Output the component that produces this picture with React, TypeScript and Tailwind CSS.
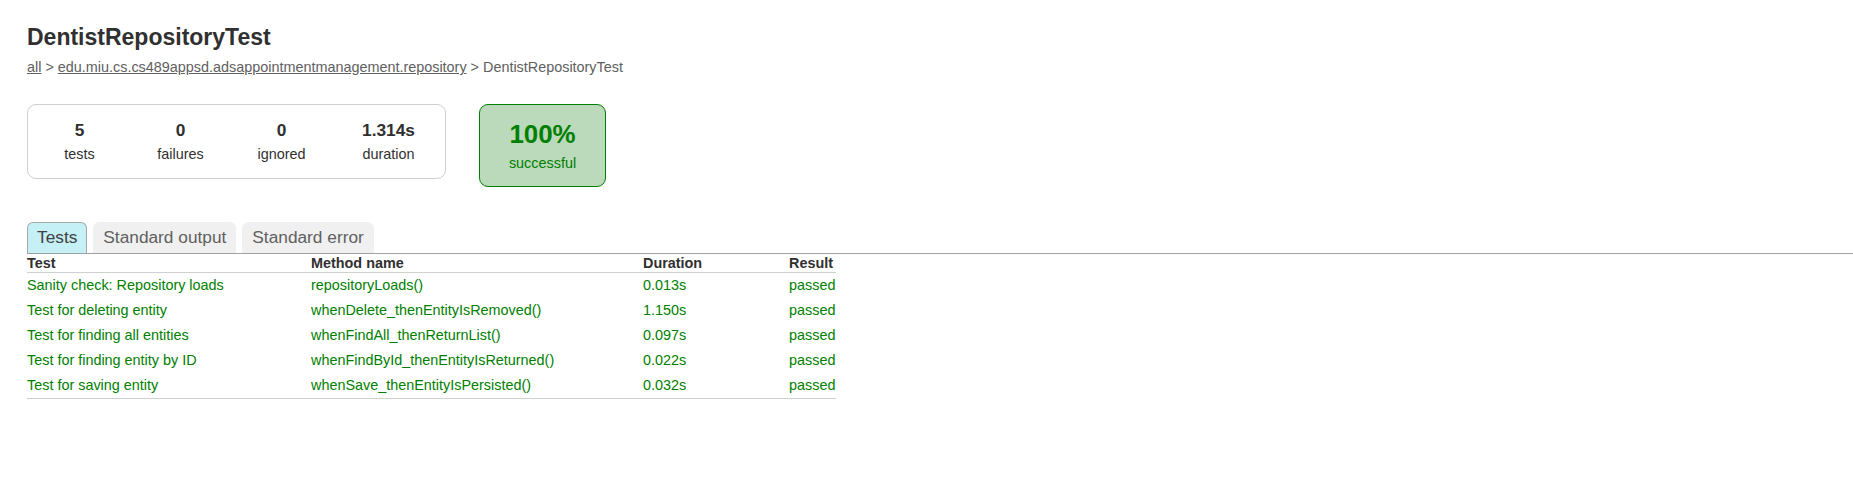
import React from 'react';

const rows = [
    { name: 'Sanity check: Repository loads', method: 'repositoryLoads()', duration: '0.013s' },
    { name: 'Test for deleting entity', method: 'whenDelete_thenEntityIsRemoved()', duration: '1.150s' },
    { name: 'Test for finding all entities', method: 'whenFindAll_thenReturnList()', duration: '0.097s' },
    { name: 'Test for finding entity by ID', method: 'whenFindById_thenEntityIsReturned()', duration: '0.022s' },
    { name: 'Test for saving entity', method: 'whenSave_thenEntityIsPersisted()', duration: '0.032s' },
];

const counters = [
    { value: '5', label: 'tests', width: 'w-[101px]' },
    { value: '0', label: 'failures', width: 'w-[101px]' },
    { value: '0', label: 'ignored', width: 'w-[101px]' },
    { value: '1.314s', label: 'duration', width: 'w-[113px]' },
];

const tabs = ['Tests', 'Standard output', 'Standard error'];

const App: React.FC = () => {
    return (
        <div className="min-h-screen bg-white text-[#303030] text-[14.4px] font-['Liberation_Sans',Arial,sans-serif]">
            <div className="pl-[27px] pt-[24px]">
                <h1 className="text-[23px] font-bold leading-[27px] whitespace-nowrap">DentistRepositoryTest</h1>
                <div className="mt-[8px] leading-[17px] text-[#606060] whitespace-nowrap">
                    <a className="underline">all</a> &gt;{' '}
                    <a className="underline">edu.miu.cs.cs489appsd.adsappointmentmanagement.repository</a> &gt; DentistRepositoryTest
                </div>

                {/* summary */}
                <div className="mt-[28px] flex items-start">
                    <div className="flex border border-[#d0d0d0] rounded-[9px] pl-[1px]">
                        {counters.map(c => (
                            <div key={c.label} className={`${c.width} text-center pt-[15px] pb-[15px]`}>
                                <p className="text-[17.3px] font-bold leading-[20px] mb-[6px]">{c.value}</p>
                                <p className="leading-[17px]">{c.label}</p>
                            </div>
                        ))}
                    </div>
                    <div className="ml-[33px] w-[127px] h-[83px] border border-[#008000] bg-[#bbd9bb] rounded-[9px] text-center text-[#008000] pt-[14px]">
                        <p className="text-[25.9px] font-bold leading-[30px] mb-[6px]">100%</p>
                        <p className="leading-[17px]">successful</p>
                    </div>
                </div>

                {/* tabs */}
                <div className="mt-[35px] flex gap-[6px] border-b border-[#a0a0a0]">
                    {tabs.map((t, i) => (
                        <div
                            key={t}
                            className={
                                i === 0
                                    ? 'px-[9px] h-[31px] flex items-center rounded-t-[6px] border border-b-0 border-[#a8a8a8] bg-[#c5f0f5] text-[17.3px] text-[#404040]'
                                    : 'px-[9px] h-[31px] flex items-center rounded-t-[6px] border border-b-0 border-[#f0f0f0] bg-[#f0f0f0] text-[17.3px] text-[#606060]'
                            }
                        >
                            {t}
                        </div>
                    ))}
                </div>

                {/* table */}
                <table className="table-fixed border-collapse w-[809px] border-b border-[#d0d0d0]">
                    <colgroup>
                        <col className="w-[284px]" />
                        <col className="w-[332px]" />
                        <col className="w-[146px]" />
                        <col className="w-[47px]" />
                    </colgroup>
                    <thead>
                        <tr className="border-b border-[#d0d0d0]">
                            <th className="text-left font-bold leading-[17px] pt-[1px] px-0 pb-0 whitespace-nowrap">Test</th>
                            <th className="text-left font-bold leading-[17px] pt-[1px] px-0 pb-0 whitespace-nowrap">Method name</th>
                            <th className="text-left font-bold leading-[17px] pt-[1px] px-0 pb-0 whitespace-nowrap">Duration</th>
                            <th className="text-left font-bold leading-[17px] pt-[1px] px-0 pb-0 whitespace-nowrap">Result</th>
                        </tr>
                    </thead>
                    <tbody className="text-[#008000]">
                        {rows.map(r => (
                            <tr key={r.method}>
                                <td className="py-[4px] leading-[17px] whitespace-nowrap">{r.name}</td>
                                <td className="py-[4px] leading-[17px] whitespace-nowrap">{r.method}</td>
                                <td className="py-[4px] leading-[17px] whitespace-nowrap">{r.duration}</td>
                                <td className="py-[4px] leading-[17px] whitespace-nowrap">passed</td>
                            </tr>
                        ))}
                    </tbody>
                </table>
            </div>
        </div>
    );
};

export default App;
